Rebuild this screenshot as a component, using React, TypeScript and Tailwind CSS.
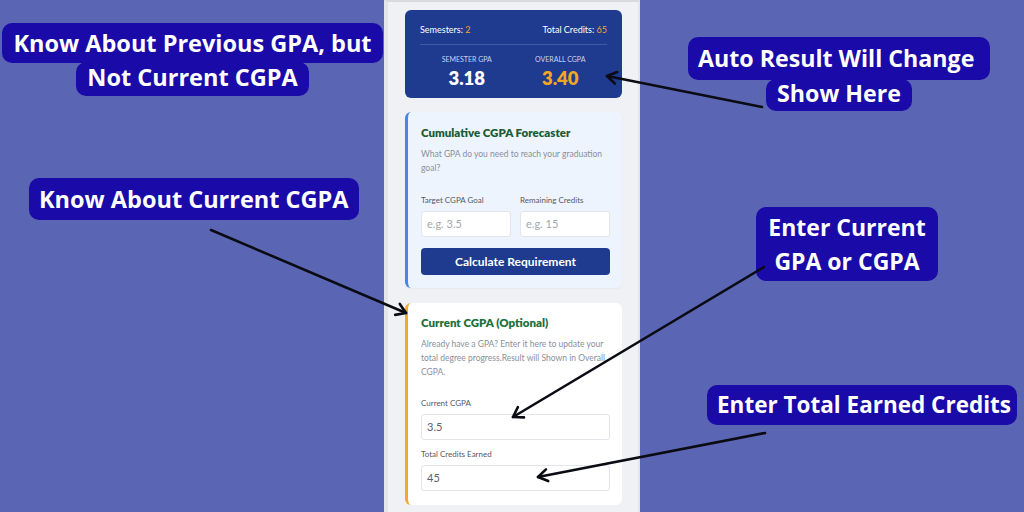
import React from 'react';

type Pt = [number, number];

// arrow shaft plus an open V head at the end point
function Arrow({ from, to }: { from: Pt; to: Pt }) {
  const [x1, y1] = from;
  const [x2, y2] = to;
  const ang = Math.atan2(y2 - y1, x2 - x1);
  const len = 11;
  const spread = Math.PI / 5.5;
  const a = [x2 - len * Math.cos(ang - spread), y2 - len * Math.sin(ang - spread)];
  const b = [x2 - len * Math.cos(ang + spread), y2 - len * Math.sin(ang + spread)];
  return (
    <g stroke="#0b0b14" strokeWidth={2.6} strokeLinecap="round" strokeLinejoin="round" fill="none">
      <line x1={x1} y1={y1} x2={x2} y2={y2} />
      <polyline points={`${a[0]},${a[1]} ${x2},${y2} ${b[0]},${b[1]}`} />
    </g>
  );
}

function Field({ label, value, placeholder, className = '' }: { label: string; value?: string; placeholder?: string; className?: string }) {
  return (
    <div className={className}>
      <div className="text-[8px] leading-[12px] text-[#555a63] whitespace-nowrap">{label}</div>
      <div className="mt-[5px] h-[26px] bg-white border border-[#e3e5ea] rounded-[3px] flex items-center px-[5px] text-[11px]">
        {value ? <span className="text-[#5d626b]">{value}</span> : <span className="text-[#a3a7ae]">{placeholder}</span>}
      </div>
    </div>
  );
}

export default function App() {
  return (
    <div className="relative w-[1024px] h-[512px] overflow-hidden bg-[#5a66b3] flex font-['Open_Sans',sans-serif]">
      {/* left annotation column */}
      <div className="relative w-[384px] h-full">
        <div className="absolute left-[2px] top-[23px] w-[381px] flex flex-col items-center text-white font-bold text-[23.5px]">
          <div className="bg-[#1a0aa8] rounded-[10px] h-[40px] leading-[40px] w-full text-center whitespace-nowrap">Know About Previous GPA, but</div>
          <div className="bg-[#1a0aa8] rounded-[10px] h-[34px] leading-[30px] px-[11px] -mt-[1px] whitespace-nowrap">Not Current CGPA</div>
        </div>
        <div className="absolute left-[29px] top-[178px] bg-[#1a0aa8] rounded-[10px] h-[42px] leading-[42px] px-[10px] text-white font-bold text-[23.5px] whitespace-nowrap">
          Know About Current CGPA
        </div>
      </div>

      {/* phone screenshot */}
      <div className="w-[256px] h-full bg-[#f0f1f4] border-l-[4px] border-r-[2px] border-[#e4e5e9] border-t-[2px] border-t-[#d9dadf] pl-[17px] pr-[16px] pt-[8px] font-['Lato',sans-serif]">
        {/* summary card */}
        <div className="h-[88px] bg-[#1e3b8f] rounded-[6px] px-[15px] text-white">
          <div className="pt-[14px] pb-[8px] flex justify-between text-[9px] leading-[12px] border-b border-white/15">
            <span>Semesters: <span className="text-[#f5a524]">2</span></span>
            <span>Total Credits: <span className="text-[#f5a524]">65</span></span>
          </div>
          <div className="grid grid-cols-2 pt-[9px] text-center">
            <div>
              <div className="text-[7px] leading-[10px] uppercase text-[#c9d3f0]">Semester GPA</div>
              <div className="mt-[4px] text-[18.5px] leading-[20px] font-extrabold">3.18</div>
            </div>
            <div>
              <div className="text-[7px] leading-[10px] uppercase text-[#c9d3f0]">Overall CGPA</div>
              <div className="mt-[4px] text-[18.5px] leading-[20px] font-extrabold text-[#f5a524]">3.40</div>
            </div>
          </div>
        </div>

        {/* forecaster */}
        <div className="mt-[14px] h-[176px] bg-[#eef4fd] border-l-[3px] border-[#4a86e8] rounded-[6px] pl-[13px] pr-[12px] pt-[13px] shadow-[0_1px_2px_rgba(0,0,0,0.04)]">
          <div className="text-[11.5px] leading-[16px] font-extrabold text-[#1a5c34]">Cumulative CGPA Forecaster</div>
          <div className="mt-[6px] text-[8.5px] leading-[14px] text-[#8a8f98] whitespace-nowrap">
            What GPA do you need to reach your graduation<br />goal?
          </div>
          <div className="mt-[19px] grid grid-cols-2 gap-[9px]">
            <Field label="Target CGPA Goal" placeholder="e.g. 3.5" />
            <Field label="Remaining Credits" placeholder="e.g. 15" />
          </div>
          <div className="mt-[11px] h-[27px] bg-[#1e3b8f] rounded-[4px] flex items-center justify-center text-white text-[12px] font-bold">
            Calculate Requirement
          </div>
        </div>

        {/* current cgpa */}
        <div className="mt-[15px] h-[202px] bg-white border-l-[3px] border-[#f4a72c] rounded-[6px] pl-[13px] pr-[12px] pt-[12px]">
          <div className="text-[11.5px] leading-[16px] font-extrabold text-[#21703e]">Current CGPA (Optional)</div>
          <div className="mt-[6px] text-[8.5px] leading-[14px] text-[#8a8f98] whitespace-nowrap">
            Already have a GPA? Enter it here to update your<br />
            total degree progress.Result will Shown in Overall<br />
            CGPA.
          </div>
          <Field className="mt-[18px]" label="Current CGPA" value="3.5" />
          <Field className="mt-[8px]" label="Total Credits Earned" value="45" />
        </div>
      </div>

      {/* right annotation column */}
      <div className="relative flex-1 h-full">
        <div className="absolute left-[48px] top-[37px] w-[302px] flex flex-col items-center text-white font-bold text-[23.2px]">
          <div className="bg-[#1a0aa8] rounded-[10px] h-[43px] leading-[42px] pl-[10px] w-full whitespace-nowrap">Auto Result Will Change</div>
          <div className="bg-[#1a0aa8] rounded-[10px] h-[32px] leading-[28px] px-[11px] -mt-[1px] whitespace-nowrap">Show Here</div>
        </div>
        <div className="absolute left-[116px] top-[207px] w-[182px] h-[74px] bg-[#1a0aa8] rounded-[10px] pt-[3px] text-center text-white font-bold text-[23px] leading-[34px] whitespace-nowrap">
          Enter Current<br />GPA or CGPA
        </div>
        <div className="absolute left-[67px] top-[385px] w-[310px] bg-[#1a0aa8] rounded-[10px] h-[40px] leading-[40px] px-[10px] text-white font-bold text-[22.5px] whitespace-nowrap">
          Enter Total Earned Credits
        </div>
      </div>

      {/* arrows */}
      <svg className="absolute inset-0 pointer-events-none" width={1024} height={512} viewBox="0 0 1024 512">
        <Arrow from={[762, 107]} to={[607, 76]} />
        <Arrow from={[211, 230]} to={[406, 313]} />
        <Arrow from={[764, 267]} to={[513, 417]} />
        <Arrow from={[765, 433]} to={[538, 477]} />
      </svg>
    </div>
  );
}
